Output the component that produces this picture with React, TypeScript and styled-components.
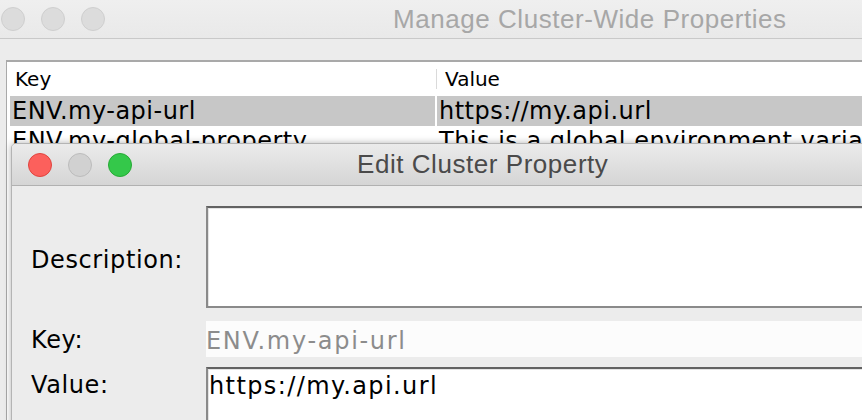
import React from 'react';
import styled, { createGlobalStyle } from 'styled-components';

const Global = createGlobalStyle`
  html, body { margin: 0; padding: 0; }
  body { width: 862px; height: 420px; overflow: hidden; background: #ececec; }
  #root { width: 862px; height: 420px; }
`;

const Desktop = styled.div`
  position: relative;
  width: 862px;
  height: 420px;
  overflow: hidden;
  background: #ececec;
`;

const BackWindow = styled.div`
  display: flex;
  flex-direction: column;
  width: 1200px;
  height: 100%;
  background: #ececec;
`;

const BackTitleBar = styled.div`
  display: flex;
  align-items: center;
  height: 38px;
  flex-shrink: 0;
  padding-left: 1px;
  background: linear-gradient(#efefef, #e9e9e9);
  border-bottom: 1px solid #c9c9c9;
`;

const Lights = styled.div`
  display: flex;
  gap: 16px;
`;

const Light = styled.span<{ $color: string; $edge: string }>`
  display: block;
  width: 24px;
  height: 24px;
  border-radius: 50%;
  box-sizing: border-box;
  background: ${(p) => p.$color};
  border: 1px solid ${(p) => p.$edge};
`;

const WindowTitle = styled.div<{ $active?: boolean; $offset: number }>`
  margin-left: ${(p) => p.$offset}px;
  font-family: 'Liberation Sans', Arial, sans-serif;
  font-size: 26px;
  letter-spacing: 0.55px;
  color: ${(p) => (p.$active ? '#4a4a4a' : '#a7a7a7')};
  white-space: nowrap;
`;

const TablePanel = styled.div`
  margin: 21px 0 0 6px;
  background: #fff;
  border-top: 2px solid #a9a9a9;
  border-left: 1px solid #a9a9a9;
  padding-left: 3px;
  flex: 1;
  font-family: 'DejaVu Sans', Verdana, sans-serif;
  color: #000;
`;

const HeaderRow = styled.div`
  display: grid;
  grid-template-columns: 426px 1fr;
  align-items: center;
  height: 34px;
`;

const HeaderCell = styled.div<{ $divider?: boolean }>`
  font-size: 20px;
  line-height: 20px;
  height: 20px;
  padding-left: ${(p) => (p.$divider ? '8px' : '5px')};
  border-left: ${(p) => (p.$divider ? '1px solid #dadada' : 'none')};
  white-space: nowrap;
`;

const DataRow = styled.div`
  display: grid;
  grid-template-columns: 425px 1fr;
  column-gap: 2px;
  height: 30px;
`;

const DataCell = styled.div<{ $selected?: boolean }>`
  font-size: 24px;
  line-height: 30px;
  letter-spacing: 0.5px;
  padding-left: 2px;
  white-space: nowrap;
  overflow: hidden;
  background: ${(p) => (p.$selected ? '#c7c7c7' : 'transparent')};
`;

const Dialog = styled.div`
  position: absolute;
  left: 11px;
  top: 143px;
  width: 1000px;
  height: 400px;
  display: flex;
  flex-direction: column;
  background: #ececec;
  border: 1px solid #b4b4b4;
  border-radius: 5px 5px 0 0;
  box-shadow: 0 0 7px rgba(0, 0, 0, 0.3);
  overflow: hidden;
`;

const DialogTitleBar = styled.div`
  display: flex;
  align-items: center;
  height: 41px;
  flex-shrink: 0;
  padding-left: 16px;
  background: linear-gradient(#ebebeb, #d5d5d5);
  border-bottom: 1px solid #b1b1b1;
`;

const Form = styled.div`
  display: flex;
  flex-direction: column;
  padding: 20px 0 0 19px;
  font-family: 'DejaVu Sans', Verdana, sans-serif;
  font-size: 24px;
  color: #000;
`;

const FormRow = styled.div<{ $center?: boolean; $gap: number }>`
  display: grid;
  grid-template-columns: 175px 1fr;
  align-items: ${(p) => (p.$center ? 'center' : 'start')};
  margin-bottom: ${(p) => p.$gap}px;
`;

const Label = styled.div<{ $lh: number; $shift?: number }>`
  line-height: ${(p) => p.$lh}px;
  padding-top: ${(p) => p.$shift ?? 0}px;
  letter-spacing: 0.6px;
  white-space: nowrap;
`;

const AreaBox = styled.div<{ $height: number }>`
  height: ${(p) => p.$height}px;
  box-sizing: border-box;
  background: #fff;
  border-top: 2px solid #626262;
  border-left: 2px solid #8a8a8a;
  border-bottom: 2px solid #8a8a8a;
  box-shadow: inset 1px 1px 0 #e4e4e4;
  padding: 5px 0 0 1px;
  line-height: 24px;
  letter-spacing: 1.4px;
  white-space: nowrap;
`;

const ValueBox = styled(AreaBox)`
  border-bottom: none;
`;

const StaticField = styled.div`
  height: 36px;
  box-sizing: border-box;
  padding-top: 3px;
  line-height: 34px;
  background: #fcfcfc;
  color: #8c8c8c;
  letter-spacing: 1.7px;
  white-space: nowrap;
`;

export default function App() {
  return (
    <Desktop>
      <Global />
      <BackWindow>
        <BackTitleBar>
          <Lights>
            <Light $color="#dcdcdc" $edge="#cfcfcf" />
            <Light $color="#dcdcdc" $edge="#cfcfcf" />
            <Light $color="#dcdcdc" $edge="#cfcfcf" />
          </Lights>
          <WindowTitle $offset={288}>Manage Cluster-Wide Properties</WindowTitle>
        </BackTitleBar>
        <TablePanel>
          <HeaderRow>
            <HeaderCell>Key</HeaderCell>
            <HeaderCell $divider>Value</HeaderCell>
          </HeaderRow>
          <DataRow>
            <DataCell $selected>ENV.my-api-url</DataCell>
            <DataCell $selected>https://my.api.url</DataCell>
          </DataRow>
          <DataRow>
            <DataCell>ENV.my-global-property</DataCell>
            <DataCell>This is a global environment variable</DataCell>
          </DataRow>
        </TablePanel>
      </BackWindow>
      <Dialog>
        <DialogTitleBar>
          <Lights>
            <Light $color="#fc605c" $edge="#e0443e" />
            <Light $color="#d1d1d1" $edge="#bcbcbc" />
            <Light $color="#34c84a" $edge="#27aa35" />
          </Lights>
          <WindowTitle $active $offset={225}>Edit Cluster Property</WindowTitle>
        </DialogTitleBar>
        <Form>
          <FormRow $center $gap={12}>
            <Label $lh={28} $shift={6}>Description:</Label>
            <AreaBox $height={102} />
          </FormRow>
          <FormRow $center $gap={10}>
            <Label $lh={34} $shift={3}>Key:</Label>
            <StaticField>ENV.my-api-url</StaticField>
          </FormRow>
          <FormRow $gap={0}>
            <Label $lh={24} $shift={6}>Value:</Label>
            <ValueBox $height={120}>https://my.api.url</ValueBox>
          </FormRow>
        </Form>
      </Dialog>
    </Desktop>
  );
}
